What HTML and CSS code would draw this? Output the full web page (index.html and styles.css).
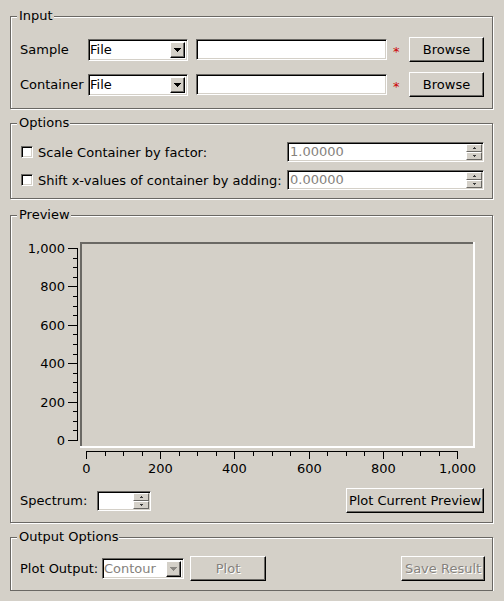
FILE: index.html
```html
<!DOCTYPE html>
<html>
<head>
<meta charset="utf-8">
<link rel="stylesheet" href="styles.css">
</head>
<body>
<div class="app">
  <section class="group g-input">
    <span class="legend">Input</span>
    <div class="irow">
      <span class="lbl">Sample</span>
      <div class="combo sunken"><span class="ctext">File</span><span class="cbtn raised"><svg width="7" height="4" viewBox="0 0 7 4"><path d="M0 0h7v1h-1v1h-1v1h-1v1h-1v-1h-1v-1h-1v-1h-1z" fill="#000"/></svg></span></div>
      <div class="field sunken"></div>
      <span class="star">*</span>
      <div class="btn raised">Browse</div>
    </div>
    <div class="irow">
      <span class="lbl">Container</span>
      <div class="combo sunken"><span class="ctext">File</span><span class="cbtn raised"><svg width="7" height="4" viewBox="0 0 7 4"><path d="M0 0h7v1h-1v1h-1v1h-1v1h-1v-1h-1v-1h-1v-1h-1z" fill="#000"/></svg></span></div>
      <div class="field sunken"></div>
      <span class="star">*</span>
      <div class="btn raised">Browse</div>
    </div>
  </section>

  <section class="group g-options">
    <span class="legend">Options</span>
    <div class="orow">
      <div class="chkline"><span class="chk sunken"></span><span>Scale Container by factor:</span></div>
      <div class="spin sunken wide"><span class="val dis">1.00000</span><span class="sb"><span class="sbb"><svg width="3" height="2" viewBox="0 0 3 2"><path d="M1 0h1v1h1v1h-3v-1h1z" fill="#3a3a3a"/></svg></span><span class="sbb"><svg width="3" height="2" viewBox="0 0 3 2"><path d="M0 0h3v1h-1v1h-1v-1h-1z" fill="#3a3a3a"/></svg></span></span></div>
    </div>
    <div class="orow">
      <div class="chkline"><span class="chk sunken"></span><span>Shift x-values of container by adding:</span></div>
      <div class="spin sunken wide"><span class="val dis">0.00000</span><span class="sb"><span class="sbb"><svg width="3" height="2" viewBox="0 0 3 2"><path d="M1 0h1v1h1v1h-3v-1h1z" fill="#3a3a3a"/></svg></span><span class="sbb"><svg width="3" height="2" viewBox="0 0 3 2"><path d="M0 0h3v1h-1v1h-1v-1h-1z" fill="#3a3a3a"/></svg></span></span></div>
    </div>
  </section>

  <section class="group g-preview">
    <span class="legend">Preview</span>
    <svg class="plot" width="481" height="262" viewBox="11 216 481 262" font-family="DejaVu Sans, sans-serif" font-size="13">
      <defs><clipPath id="xlab"><rect x="11" y="460" width="481" height="14"/></clipPath></defs>
      <rect x="80" y="242" width="393" height="2" fill="#6a6864"/>
      <rect x="80" y="242" width="2" height="204" fill="#6a6864"/>
      <rect x="473" y="242" width="2" height="206" fill="#fff"/>
      <rect x="80" y="446" width="395" height="2" fill="#fff"/>
      <g fill="#000" shape-rendering="crispEdges">
        <rect x="77" y="248" width="1" height="193"/>
        <rect x="68" y="248" width="9" height="1"/>
        <rect x="68" y="286" width="9" height="1"/>
        <rect x="68" y="325" width="9" height="1"/>
        <rect x="68" y="363" width="9" height="1"/>
        <rect x="68" y="402" width="9" height="1"/>
        <rect x="68" y="440" width="9" height="1"/>
        <rect x="73" y="258" width="4" height="1"/>
        <rect x="73" y="267" width="4" height="1"/>
        <rect x="73" y="277" width="4" height="1"/>
        <rect x="73" y="296" width="4" height="1"/>
        <rect x="73" y="306" width="4" height="1"/>
        <rect x="73" y="315" width="4" height="1"/>
        <rect x="73" y="334" width="4" height="1"/>
        <rect x="73" y="344" width="4" height="1"/>
        <rect x="73" y="354" width="4" height="1"/>
        <rect x="73" y="373" width="4" height="1"/>
        <rect x="73" y="382" width="4" height="1"/>
        <rect x="73" y="392" width="4" height="1"/>
        <rect x="73" y="411" width="4" height="1"/>
        <rect x="73" y="421" width="4" height="1"/>
        <rect x="73" y="430" width="4" height="1"/>
        <rect x="86" y="451" width="372" height="1"/>
        <rect x="86" y="451" width="1" height="8"/>
        <rect x="160" y="451" width="1" height="8"/>
        <rect x="234" y="451" width="1" height="8"/>
        <rect x="309" y="451" width="1" height="8"/>
        <rect x="383" y="451" width="1" height="8"/>
        <rect x="457" y="451" width="1" height="8"/>
        <rect x="105" y="451" width="1" height="5"/>
        <rect x="123" y="451" width="1" height="5"/>
        <rect x="142" y="451" width="1" height="5"/>
        <rect x="179" y="451" width="1" height="5"/>
        <rect x="197" y="451" width="1" height="5"/>
        <rect x="216" y="451" width="1" height="5"/>
        <rect x="253" y="451" width="1" height="5"/>
        <rect x="272" y="451" width="1" height="5"/>
        <rect x="290" y="451" width="1" height="5"/>
        <rect x="327" y="451" width="1" height="5"/>
        <rect x="346" y="451" width="1" height="5"/>
        <rect x="364" y="451" width="1" height="5"/>
        <rect x="402" y="451" width="1" height="5"/>
        <rect x="420" y="451" width="1" height="5"/>
        <rect x="439" y="451" width="1" height="5"/>
      </g>
      <g fill="#000" text-anchor="end">
        <text x="65" y="253">1,000</text>
        <text x="65" y="291">800</text>
        <text x="65" y="330">600</text>
        <text x="65" y="368">400</text>
        <text x="65" y="407">200</text>
        <text x="65" y="445">0</text>
      </g>
      <g fill="#000" text-anchor="middle" clip-path="url(#xlab)">
        <text x="86.5" y="473">0</text>
        <text x="160.5" y="473">200</text>
        <text x="234.5" y="473">400</text>
        <text x="309.5" y="473">600</text>
        <text x="383.5" y="473">800</text>
        <text x="457.5" y="473">1,000</text>
      </g>
    </svg>
    <div class="prow">
      <span class="lbl lbl-spec">Spectrum:</span>
      <div class="spin sunken small"><span class="val"></span><span class="sb"><span class="sbb"><svg width="3" height="2" viewBox="0 0 3 2"><path d="M1 0h1v1h1v1h-3v-1h1z" fill="#3a3a3a"/></svg></span><span class="sbb"><svg width="3" height="2" viewBox="0 0 3 2"><path d="M0 0h3v1h-1v1h-1v-1h-1z" fill="#3a3a3a"/></svg></span></span></div>
      <div class="btn raised btn-preview">Plot Current Preview</div>
    </div>
  </section>

  <section class="group g-output">
    <span class="legend">Output Options</span>
    <div class="prow">
      <span class="lbl lbl-out">Plot Output:</span>
      <div class="combo sunken combo-out"><span class="ctext dis">Contour</span><span class="cbtn raised"><svg width="7" height="4" viewBox="0 0 7 4"><path d="M0 0h7v1h-1v1h-1v1h-1v1h-1v-1h-1v-1h-1v-1h-1z" fill="#8a8782"/></svg></span></div>
      <div class="btn raised btn-plot dis-btn">Plot</div>
      <div class="btn raised btn-save dis-btn">Save Result</div>
    </div>
  </section>
</div>
</body>
</html>
```

FILE: styles.css
```css
* { box-sizing: border-box; }

body {
  margin: 0;
  background: #d4d0c8;
  font-family: "DejaVu Sans", sans-serif;
  font-size: 13px;
  color: #000;
}

.app {
  padding: 16px 0 0 10px;
  width: 504px;
}

.group {
  position: relative;
  width: 483px;
  border: 1px solid #6a6864;
  box-shadow: inset 1px 1px #fff, 1px 1px #fff;
}

.legend {
  position: absolute;
  left: 6px;
  top: -9px;
  padding: 0 1px 0 2px;
  line-height: 16px;
  background: #d4d0c8;
  white-space: nowrap;
}

.sunken {
  border: 1px solid;
  border-color: #6a6864 #fff #fff #6a6864;
  box-shadow: inset 1px 1px #000, inset -1px -1px #d4d0c8;
  background: #fff;
}

.raised {
  border: 1px solid;
  border-color: #fff #000 #000 #fff;
  box-shadow: inset -1px -1px #6a6864;
  background: #d4d0c8;
}

.btn {
  display: flex;
  align-items: center;
  justify-content: center;
  height: 25px;
  padding-bottom: 1px;
  white-space: nowrap;
}

.dis { color: #85827d; }

.dis-btn {
  color: #85827d;
  text-shadow: 1px 1px #fff;
}

/* Input */
.g-input {
  height: 93px;
  padding: 20px 8px 0 9px;
  display: flex;
  flex-direction: column;
  gap: 10px;
}

.irow {
  display: grid;
  grid-template-columns: 68px 108px 191px 22px 75px;
  height: 25px;
  align-items: center;
}

.combo {
  width: 100px;
  height: 22px;
  display: flex;
  align-items: center;
  padding: 1px;
}

.ctext {
  flex: 1;
  line-height: 16px;
  white-space: nowrap;
  overflow: hidden;
}

.cbtn {
  width: 15px;
  height: 16px;
  margin-right: 1px;
  display: flex;
  align-items: center;
  justify-content: center;
}

.cbtn svg { display: block; }

.field {
  width: 191px;
  height: 21px;
}

.star {
  color: #cc0000;
  padding-left: 6px;
  padding-top: 4px;
}

/* Options */
.g-options {
  margin-top: 14px;
  height: 76px;
  padding: 18px 8px 0 10px;
  display: flex;
  flex-direction: column;
  gap: 8px;
}

.orow {
  display: flex;
  justify-content: space-between;
  align-items: center;
  height: 20px;
}

.chkline {
  display: flex;
  align-items: center;
  gap: 5px;
}

.chk {
  width: 12px;
  height: 12px;
}

.spin {
  display: flex;
  height: 20px;
  padding: 1px;
}

.spin.wide { width: 197px; }
.spin.small { width: 54px; }

.val {
  flex: 1;
  line-height: 16px;
  padding-left: 1px;
}

.sb {
  width: 16px;
  display: flex;
  flex-direction: column;
}

.sbb {
  flex: 1;
  display: flex;
  align-items: center;
  justify-content: center;
  border: 1px solid;
  border-color: #fff #6a6864 #6a6864 #fff;
  background: #d4d0c8;
}

.sb svg { display: block; }

/* Preview */
.g-preview {
  margin-top: 16px;
  height: 308px;
}

.plot { display: block; }

.prow {
  display: flex;
  align-items: center;
  height: 25px;
  margin-top: 10px;
  padding: 0 8px 0 9px;
}

.lbl-spec { width: 77px; }

.btn-preview {
  width: 138px;
  margin-left: auto;
}

/* Output */
.g-output {
  margin-top: 14px;
  height: 54px;
  padding-top: 18px;
}

.g-output .prow {
  margin-top: 0;
  padding: 0 7px 0 9px;
}

.lbl-out { width: 82px; }

.combo-out {
  width: 82px;
  height: 21px;
}

.btn-plot {
  width: 76px;
  margin-left: 6px;
}

.btn-save {
  width: 84px;
  margin-left: auto;
}
```
